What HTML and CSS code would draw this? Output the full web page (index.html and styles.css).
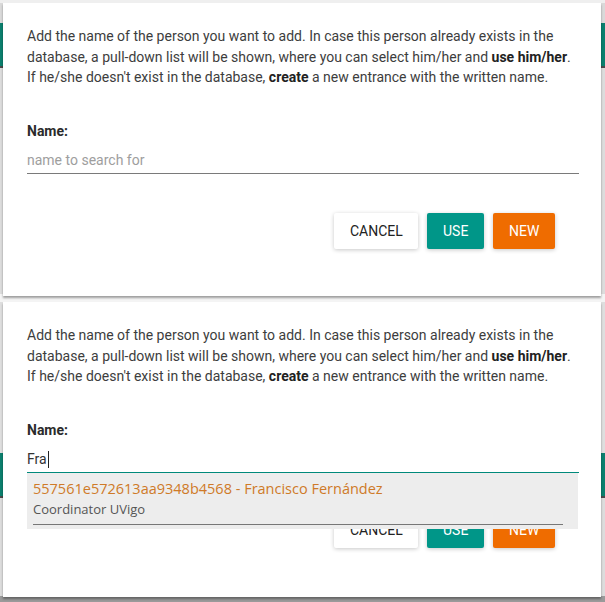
FILE: index.html
```html
<!DOCTYPE html>
<html>
<head>
<meta charset="utf-8">
<link rel="stylesheet" href="styles.css">
</head>
<body>
<div class="shot shot-top">
  <div class="dialog">
    <p class="intro">Add the name of the person you want to add. In case this person already exists in the<br>database, a pull-down list will be shown, where you can select him/her and <b>use him/her</b>.<br>If he/she doesn't exist in the database, <b>create</b> a new entrance with the written name.</p>
    <div class="label">Name:</div>
    <div class="field"><span class="placeholder">name to search for</span></div>
    <div class="actions">
      <button class="btn btn-cancel">Cancel</button>
      <button class="btn btn-use">Use</button>
      <button class="btn btn-new">New</button>
    </div>
  </div>
</div>
<div class="shot shot-bottom">
  <div class="dialog">
    <p class="intro">Add the name of the person you want to add. In case this person already exists in the<br>database, a pull-down list will be shown, where you can select him/her and <b>use him/her</b>.<br>If he/she doesn't exist in the database, <b>create</b> a new entrance with the written name.</p>
    <div class="label">Name:</div>
    <div class="field-wrap">
      <div class="field focused"><span class="value">Fra</span><span class="caret"></span></div>
      <div class="dropdown">
        <div class="option">
          <div class="opt-title">557561e572613aa9348b4568 - Francisco Fernández</div>
          <div class="opt-sub">Coordinator UVigo</div>
        </div>
      </div>
    </div>
    <div class="actions">
      <button class="btn btn-cancel">Cancel</button>
      <button class="btn btn-use">Use</button>
      <button class="btn btn-new">New</button>
    </div>
  </div>
</div>
</body>
</html>
```
FILE: styles.css
```css
* { box-sizing: border-box; }
html, body { margin: 0; padding: 0; }
body {
  width: 605px;
  height: 602px;
  overflow: hidden;
  background: #ececec;
  font-family: Roboto, "Liberation Sans", sans-serif;
}
.shot {
  display: flex;
  flex-direction: column;
  padding: 3px 4px 0 3px;
}
.shot-top {
  height: 300px;
  background: linear-gradient(to bottom, #efefef 0 3px, #d9d9d9 3px 23px, #0b7f6e 23px 66px, #4a4a4a 66px 68px, #dcdcdc 68px 294px, #f4f4f4 294px);
}
.shot-bottom {
  height: 302px;
  padding-top: 2px;
  background: linear-gradient(to bottom, #f4f4f4 0 2px, #dedede 2px 153px, #0b7f6e 153px 196px, #4a4a4a 196px 198px, #dcdcdc 198px 296px, #9a9a9a 296px);
}
.dialog {
  position: relative;
  height: 293px;
  background: #fff;
  padding: 23px 22px 0 24px;
  box-shadow: 0 2px 2px rgba(0, 0, 0, 0.35);
  color: #3a3a3a;
}
.shot-bottom .dialog { height: 295px; }
.intro {
  margin: 0;
  font-size: 14px;
  line-height: 20.5px;
  color: #3d3d3d;
}
.intro b { font-weight: 700; color: #222; }
.label {
  margin-top: 33px;
  font-size: 14px;
  line-height: 20px;
  font-weight: 700;
  color: #2b2b2b;
}
.field {
  height: 33px;
  padding-top: 9px;
  border-bottom: 1px solid #7a7a7a;
  font-size: 14px;
  line-height: 20px;
  display: flex;
  align-items: flex-start;
}
.field.focused { border-bottom-color: #00897b; }
.placeholder { color: #9e9e9e; }
.value { color: #333; }
.caret {
  display: inline-block;
  width: 1px;
  height: 17px;
  margin-top: 2px;
  margin-left: 1px;
  background: #222;
}
.field-wrap { position: relative; }
.dropdown {
  position: absolute;
  left: 0;
  right: 1px;
  top: 33px;
  height: 56px;
  background: #ededed;
  z-index: 2;
}
.option {
  margin: 0 15px 0 6px;
  padding-top: 5px;
  height: 52px;
  border-bottom: 1px solid #777;
  font-family: "Open Sans", "Noto Sans", sans-serif;
}
.opt-title {
  font-size: 14.5px;
  line-height: 21px;
  color: #cf7a28;
}
.opt-sub {
  font-size: 13px;
  line-height: 20px;
  color: #555;
}
.actions {
  display: flex;
  justify-content: flex-end;
  gap: 9px;
  margin-top: 39px;
  padding-right: 24px;
}
.btn {
  height: 36px;
  border: none;
  border-radius: 2px;
  font-family: Roboto, "Liberation Sans", sans-serif;
  font-size: 14px;
  text-transform: uppercase;
  box-shadow: 0 1px 4px rgba(0, 0, 0, 0.22);
  padding: 0 16px;
}
.btn-cancel { width: 84px; background: #fff; color: #222; }
.btn-use { width: 57px; background: #009688; color: #fff; }
.btn-new { width: 62px; background: #ef6c00; color: #fff; }
```
